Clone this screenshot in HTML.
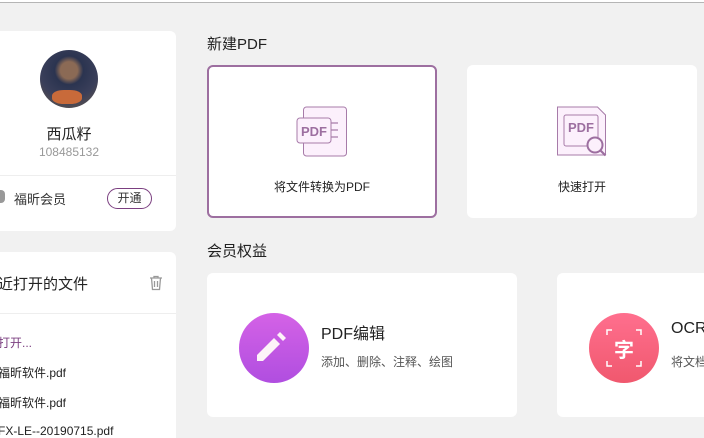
<!DOCTYPE html>
<html><head><meta charset="utf-8"><style>
*{margin:0;padding:0;box-sizing:border-box}
html,body{width:704px;height:438px;overflow:hidden}
body{background:#f1f1f1;font-family:"Liberation Sans","Noto Sans CJK SC",sans-serif;position:relative;color:#333}
.a{position:absolute;white-space:nowrap}
.card{position:absolute;background:#fff;border-radius:6px}
</style></head><body>
<div class="a" style="left:0;top:0;width:704px;height:3px;background:#fff;border-bottom:1px solid #b5b5b5"></div>

<div class="card" style="left:-6px;top:31px;width:182px;height:200px"></div>
<div class="a" style="left:40px;top:50px;width:58px;height:58px;border-radius:50%;background:radial-gradient(circle at 50% 35%,#8b6a55 0 18%,#2b3450 30%,#3a3f5a 60%,#6a5a48 100%);overflow:hidden">
 <div class="a" style="left:12px;top:40px;width:30px;height:14px;background:#c86a3a;border-radius:40%"></div>
</div>
<div class="a" style="left:0;top:123px;width:138px;text-align:center;font-size:15px;color:#222">西瓜籽</div>
<div class="a" style="left:0;top:145px;width:138px;text-align:center;font-size:12px;color:#999">108485132</div>
<div class="a" style="left:0;top:175px;width:176px;height:1px;background:#eee"></div>
<div class="a" style="left:-5px;top:190px;width:10px;height:13px;border-radius:4px;background:#999"></div>
<div class="a" style="left:14px;top:189px;font-size:13px;color:#333">福昕会员</div>
<div class="a" style="left:107px;top:188px;width:45px;height:21px;border:1.5px solid #7b3f80;border-radius:11px;font-size:12px;text-align:center;line-height:18px;color:#333">开通</div>

<div class="card" style="left:-6px;top:252px;width:182px;height:200px"></div>
<div class="a" style="left:-2px;top:273px;font-size:15px;color:#222">近打开的文件</div>
<svg class="a" style="left:149px;top:275px" width="14" height="16" viewBox="0 0 14 16"><path d="M1 3h12M5 3V1.5h4V3M2.5 3l1 11.5h7l1-11.5M5.5 6v6M8.5 6v6" fill="none" stroke="#999" stroke-width="1.3"/></svg>
<div class="a" style="left:0;top:313px;width:176px;height:1px;background:#eee"></div>
<div class="a" style="left:-2px;top:334px;font-size:12px;color:#7b3f80">打开...</div>
<div class="a" style="left:-2px;top:364px;font-size:12px;color:#222">福昕软件.pdf</div>
<div class="a" style="left:-2px;top:394px;font-size:12px;color:#222">福昕软件.pdf</div>
<div class="a" style="left:-2px;top:424px;font-size:12px;color:#222">FX-LE--20190715.pdf</div>

<div class="a" style="left:207px;top:33px;font-size:15px;color:#222">新建PDF</div>
<div class="card" style="left:207px;top:65px;width:230px;height:153px;border:2px solid #9d6fa0"></div>
<svg class="a" style="left:296px;top:106px" width="52" height="52" viewBox="0 0 52 52">
<rect x="7.5" y="1" width="43" height="49" rx="3" fill="#fcf0fc" stroke="#a77ba9" stroke-width="1"/>
<rect x="1" y="12" width="34" height="25" rx="3" fill="#fcf0fc" stroke="#a77ba9" stroke-width="1"/>
<path d="M35 17h7M35 24h7M35 31h7" stroke="#a77ba9" stroke-width="1.2"/>
<text x="18" y="30" text-anchor="middle" font-family="Liberation Sans" font-weight="bold" font-size="13" fill="#9d6fa0">PDF</text>
</svg>
<div class="a" style="left:207px;top:178px;width:230px;text-align:center;font-size:12px;color:#222">将文件转换为PDF</div>

<div class="card" style="left:467px;top:65px;width:230px;height:153px"></div>
<svg class="a" style="left:556px;top:106px" width="52" height="52" viewBox="0 0 52 52">
<path d="M1.5 1h40l8 8v40H1.5z" fill="#fcf0fc" stroke="#a77ba9" stroke-width="1"/>
<rect x="8" y="9" width="34" height="31" rx="2" fill="#fcf0fc" stroke="#a77ba9" stroke-width="1"/>
<text x="25" y="26" text-anchor="middle" font-family="Liberation Sans" font-weight="bold" font-size="13" fill="#9d6fa0">PDF</text>
<circle cx="39" cy="39" r="7.5" fill="#fcf0fc" stroke="#9d6fa0" stroke-width="2"/>
<path d="M44.5 44.5l5 5" stroke="#9d6fa0" stroke-width="2.2"/>
</svg>
<div class="a" style="left:467px;top:178px;width:230px;text-align:center;font-size:12px;color:#222">快速打开</div>

<div class="a" style="left:207px;top:240px;font-size:15px;color:#222">会员权益</div>
<div class="card" style="left:207px;top:273px;width:310px;height:144px"></div>
<div class="a" style="left:239px;top:313px;width:70px;height:70px;border-radius:50%;background:linear-gradient(#d462e6,#b04ee0)"></div>
<svg class="a" style="left:255px;top:329px" width="38" height="38" viewBox="0 0 38 38"><path d="M2 26l17-17 6 6-17 17H2z" fill="#fdf3f8"/><path d="M22 6l3-3 6 6-3 3z" fill="#fdf3f8"/></svg>
<div class="a" style="left:321px;top:320px;font-size:16px;color:#222">PDF编辑</div>
<div class="a" style="left:321px;top:353px;font-size:12px;color:#555">添加、删除、注释、绘图</div>

<div class="card" style="left:557px;top:273px;width:160px;height:144px"></div>
<div class="a" style="left:589px;top:313px;width:70px;height:70px;border-radius:50%;background:linear-gradient(#ff6f8e,#f0586e)"></div>
<svg class="a" style="left:604px;top:328px" width="40" height="40" viewBox="0 0 40 40"><path d="M8 2H3v5M32 2h5v5M8 38H3v-5M32 38h5v-5" fill="none" stroke="#fff" stroke-width="1.5"/></svg>
<div class="a" style="left:589px;top:334px;width:70px;text-align:center;font-size:20px;font-weight:bold;color:#fff">字</div>
<div class="a" style="left:671px;top:320px;font-size:16px;color:#222">OCR</div>
<div class="a" style="left:671px;top:353px;font-size:12px;color:#555">将文档</div>
</body></html>
